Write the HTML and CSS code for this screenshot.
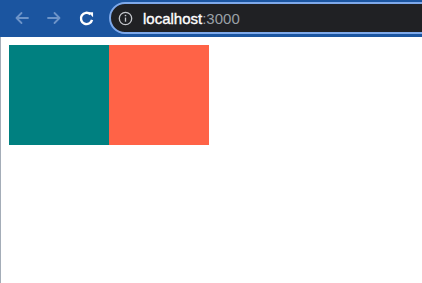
FILE: index.html
```html
<!DOCTYPE html>
<html lang="en">

<head>
    <meta charset="UTF-8">
    <meta name="viewport" content="width=device-width, initial-scale=1.0">
    <title>localhost:3000</title>
    <link rel="stylesheet" href="styles.css">
</head>

<body>
    <div class="toolbar">
        <div class="nav">
            <svg class="icon muted" viewBox="0 0 16 16" width="16" height="16">
                <path d="M14 8H2.5M7.5 3L2.5 8l5 5" />
            </svg>
            <svg class="icon muted" viewBox="0 0 16 16" width="16" height="16">
                <path d="M2 8h11.5M8.5 3l5 5-5 5" />
            </svg>
            <svg class="icon reload" viewBox="0 0 16 16" width="17" height="17">
                <path d="M13.2 9.3A5.3 5.3 0 1 1 11.6 4" />
                <path class="fill" d="M9.6 2.2h4.6v4.6z" />
            </svg>
        </div>
        <div class="omnibox">
            <svg class="info" viewBox="0 0 16 16" width="15" height="15">
                <circle cx="8" cy="8" r="6.6" />
                <path d="M8 7v4.4" />
                <circle class="dot" cx="8" cy="4.8" r="0.9" />
            </svg>
            <span class="host">localhost</span><span class="port">:3000</span>
        </div>
    </div>
    <div class="page">
        <div class="boxes">
            <div class="box teal"></div>
            <div class="box tomato"></div>
        </div>
    </div>
</body>

</html>
```

FILE: styles.css
```css
html,
body {
    margin: 0;
    height: 100%;
}

body {
    display: flex;
    flex-direction: column;
    font-family: "Liberation Sans", Arial, sans-serif;
    background: #fff;
}

.toolbar {
    height: 37px;
    background-color: #1b55a0;
    display: flex;
    align-items: center;
    box-sizing: border-box;
    padding: 2px 0 3px 14px;
}

.nav {
    display: flex;
    gap: 16px;
    align-items: center;
    width: 95px;
}

.icon {
    fill: none;
    stroke-width: 1.8;
    stroke-linecap: round;
    stroke-linejoin: round;
}

.muted {
    stroke: #6d94c8;
}

.reload {
    stroke: #fff;
    stroke-width: 2.3;
    stroke-linecap: butt;
}

.reload .fill {
    fill: #fff;
    stroke: none;
}

.omnibox {
    flex: 1;
    height: 28px;
    margin-right: -20px;
    border: 2px solid #7ea9ea;
    border-radius: 16px;
    background-color: #202124;
    display: flex;
    align-items: center;
    padding-left: 7px;
    font-size: 15px;
}

.info {
    fill: none;
    stroke: #c4c7cc;
    stroke-width: 1.4;
    margin-right: 10px;
}

.info .dot {
    fill: #c4c7cc;
    stroke: none;
}

.host {
    color: #fff;
    -webkit-text-stroke: 0.35px #fff;
}

.port {
    color: #9aa0a6;
}

.page {
    flex: 1;
    border-left: 1px solid #a4adb8;
    padding: 8px;
}

.boxes {
    display: flex;
}

.box {
    width: 100px;
    height: 100px;
}

.teal {
    background-color: teal;
}

.tomato {
    background-color: tomato;
}
```
